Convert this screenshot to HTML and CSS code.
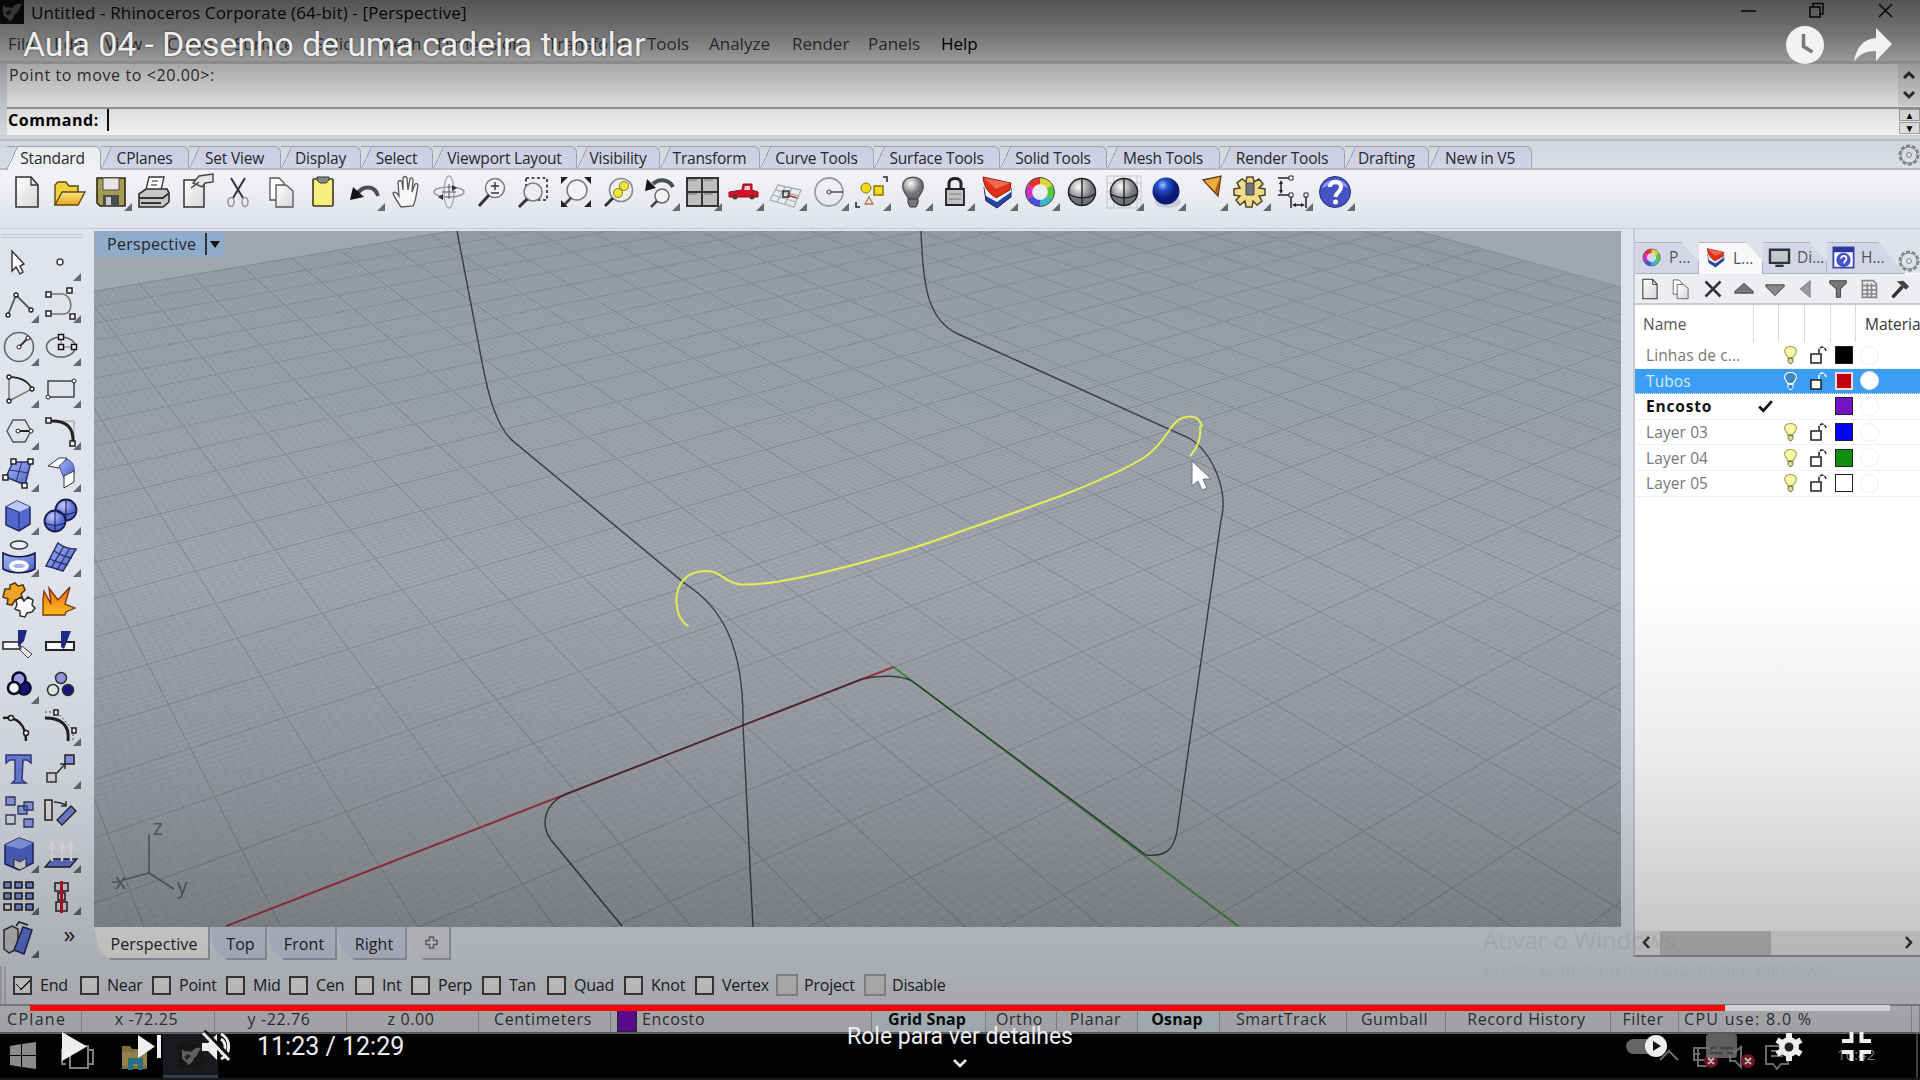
FILE: index.html
```html
<!DOCTYPE html>
<html lang="pt">
<head>
<meta charset="utf-8">
<title>Aula 04 - Desenho de uma cadeira tubular</title>
<link rel="stylesheet" href="styles.css">
</head>
<body>
<svg class="sprite" width="0" height="0">
  <defs>
    <linearGradient id="gPaper" x2="1" y2="1"><stop offset="0" stop-color="#fff"/><stop offset="1" stop-color="#d4d6d8"/></linearGradient>
    <linearGradient id="gGold" y2="1" x2="0"><stop offset="0" stop-color="#ffe68a"/><stop offset="1" stop-color="#eaa21a"/></linearGradient>
    <linearGradient id="gBlue" x2="1" y2="1"><stop offset="0" stop-color="#a9b8f5"/><stop offset="1" stop-color="#4a60c4"/></linearGradient>
    <linearGradient id="gFire" y2="1" x2="0"><stop offset="0" stop-color="#e8641a"/><stop offset="1" stop-color="#ffc21e"/></linearGradient>
    <radialGradient id="gBall" cx=".38" cy=".3"><stop offset="0" stop-color="#fff"/><stop offset="1" stop-color="#6f7276"/></radialGradient>
    <radialGradient id="gBlueBall" cx=".38" cy=".28"><stop offset="0" stop-color="#9fc4ff"/><stop offset=".4" stop-color="#2450c8"/><stop offset="1" stop-color="#0a1a78"/></radialGradient>
    <radialGradient id="gSoft" cx=".38" cy=".28"><stop offset="0" stop-color="#c3ccfb"/><stop offset="1" stop-color="#5468cc"/></radialGradient>
  </defs>
  <symbol id="new" viewBox="0 0 42 42"><path d="M10 6h15l7 8v22H10z" fill="url(#gPaper)" stroke="#333" stroke-width="1.6"/><path d="M25 6v8h7" fill="none" stroke="#333" stroke-width="1.3"/></symbol>
  <symbol id="open" viewBox="0 0 42 42"><path d="M7 34V14l3-3h8l3 4h9v7" fill="#f0d23c" stroke="#5b4a10" stroke-width="1.4"/><path d="M7 34l7-13h23l-7 13z" fill="url(#gGold)" stroke="#5b4a10" stroke-width="1.4"/></symbol>
  <symbol id="save" viewBox="0 0 42 42"><path d="M7 7h28v28H10l-3-3z" fill="#a79a52" stroke="#2c2a18" stroke-width="1.6"/><path d="M13 7h16v12H13z" fill="#e6e6e6" stroke="#55513a"/><path d="M13 24h16v11H13z" fill="#4c4c4c"/><path d="M16 26h5v8h-5z" fill="#ccc"/></symbol>
  <symbol id="print" viewBox="0 0 42 42"><path d="M13 19l3-13h15l-3 13z" fill="#fff" stroke="#333" stroke-width="1.3"/><path d="M19 10h6m-7 4h6" stroke="#666" stroke-width="1.5"/><path d="M6 23l7-5h21l2 4v9l-6 5H6z" fill="#c5c7c9" stroke="#2c2c2c" stroke-width="1.6"/><path d="M6 27h24l6-5M8 32h20" stroke="#333" fill="none" stroke-width="1.8"/></symbol>
  <symbol id="props" viewBox="0 0 42 42"><path d="M9 9h20v27H9z" fill="url(#gPaper)" stroke="#333" stroke-width="1.5"/><path d="M18 12l6-7 14-2v8l-8 1-3 4zM16 17l8-6" fill="#e6e6e6" stroke="#444" stroke-width="1.4"/></symbol>
  <symbol id="cut" viewBox="0 0 42 42"><path d="M14 7l12 20M28 7L16 27" stroke="#333" stroke-width="2"/><ellipse cx="14" cy="31" rx="3" ry="4.500" fill="none" stroke="#999" stroke-width="1.6"/><ellipse cx="28" cy="31" rx="3" ry="4.500" fill="none" stroke="#999" stroke-width="1.6"/></symbol>
  <symbol id="copy" viewBox="0 0 42 42"><path d="M11 7h9l5 5v17H11z" fill="#fff" stroke="#555" stroke-width="1.3"/><path d="M17 14h10l7 6v16H17z" fill="url(#gPaper)" stroke="#555" stroke-width="1.3"/></symbol>
  <symbol id="paste" viewBox="0 0 42 42"><rect x="12" y="8" width="20" height="27" rx="1" fill="#f7ef7c" stroke="#3c3820" stroke-width="1.6"/><path d="M16 6h12v3l-3 3h-6l-3-3z" fill="#888" stroke="#333"/></symbol>
  <symbol id="undo" viewBox="0 0 42 42"><path d="M34 25C31 14 19 14 13 23" fill="none" stroke="#4b4e52" stroke-width="4"/><path d="M6 29l3-13 11 10z" fill="#151515"/></symbol>
  <symbol id="hand" viewBox="0 0 42 42"><path d="M15 36c-4-6-7-10-8-14 2-2 4 0 6 3L12 11c1-2 3-2 4 0l1 8 0-12c1-2 3-2 4 0l1 12 2-11c1-2 3-1 3 1l-1 12 3-8c2-1 3 0 3 2-2 8-2 15-5 20z" fill="#f7f7f7" stroke="#555" stroke-width="1.3"/></symbol>
  <symbol id="orbit" viewBox="0 0 42 42"><ellipse cx="21" cy="21" rx="15" ry="5" fill="none" stroke="#8c8f93" stroke-width="1.3"/><ellipse cx="21" cy="21" rx="5" ry="16" fill="none" stroke="#a4a6aa" stroke-width="1.3"/><path d="M21 13v15m-7-7h14" stroke="#555"/><path d="M24 14l5 3-5 3zM15 23l-5 3 5 3z" fill="#333"/></symbol>
  <symbol id="zoom" viewBox="0 0 42 42"><circle cx="25" cy="17" r="9.500" fill="#f0f1f2" stroke="#77797c" stroke-width="1.5"/><path d="M19 24L9 35" stroke="#333" stroke-width="3"/><path d="M21 15h8m-4-4v8m-4 3h8" stroke="#333" stroke-width="1.4"/></symbol>
  <symbol id="zoomwin" viewBox="0 0 42 42"><path d="M14 7h21v22H14z" fill="none" stroke="#222" stroke-width="1.6" stroke-dasharray="3 2.500"/><circle cx="21" cy="21" r="9" fill="#ecedef" stroke="#77797c" stroke-width="1.5"/><path d="M15 28l-8 8" stroke="#333" stroke-width="3"/></symbol>
  <symbol id="zoomext" viewBox="0 0 42 42"><circle cx="23" cy="19" r="10" fill="#f2f3f4" stroke="#77797c" stroke-width="1.5"/><path d="M17 27l-7 7" stroke="#444" stroke-width="2.500"/><path d="M7 6h7l-7 7zM37 6h-7l7 7zM7 36h7l-7-7zM37 36h-7l7-7z" fill="#222"/></symbol>
  <symbol id="zoomsel" viewBox="0 0 42 42"><circle cx="24" cy="19" r="11.500" fill="#eef0e6" stroke="#85878a" stroke-width="1.6"/><path d="M16 27l-8 8" stroke="#333" stroke-width="3"/><circle cx="27" cy="15" r="4.500" fill="#f4e63a" stroke="#8a801a"/><circle cx="21" cy="22" r="4.500" fill="#f4e63a" stroke="#8a801a"/></symbol>
  <symbol id="undoview" viewBox="0 0 42 42"><path d="M34 16C29 7 19 8 14 13" fill="none" stroke="#4b4e52" stroke-width="4"/><path d="M6 20l2-12 9 9z" fill="#151515"/><circle cx="23" cy="25" r="7" fill="#f2f3f4" stroke="#666" stroke-width="1.5"/><path d="M18 30l-6 6" stroke="#444" stroke-width="2.500"/></symbol>
  <symbol id="views" viewBox="0 0 42 42"><path d="M6 7h31v28H6z" fill="#bcbec0" stroke="#333" stroke-width="2"/><path d="M21 7v28M6 21h31" stroke="#333" stroke-width="2"/><path d="M7 9h9m7 0h9M7 23h9m7 0h9" stroke="#777" stroke-width="1"/></symbol>
  <symbol id="car" viewBox="0 0 42 42"><path d="M6 21l13-2 1-6h9v6l6 2v5H6z" fill="#d5122b" stroke="#8c1020"/><path d="M22 15h5v4h-6z" fill="#f0c9cd"/><circle cx="12" cy="26" r="2.500" fill="#633"/><circle cx="29" cy="26" r="2.500" fill="#633"/></symbol>
  <symbol id="cplane" viewBox="0 0 42 42"><path d="M13 14l23 5-7 17-24-7zM20 16l-8 15M27 17l-7 16M11 19l23 6M8 24l23 7" fill="none" stroke="#a9b0ac" stroke-width="1.3"/><path d="M18 20h6v6h-6z" fill="none" stroke="#333" stroke-width="1.500"/><path d="M22 24l10 3" stroke="#a33" stroke-width="1.500"/></symbol>
  <symbol id="radius" viewBox="0 0 42 42"><circle cx="21" cy="21" r="14" fill="none" stroke="#9b9da1" stroke-width="1.8"/><circle cx="21" cy="21" r="2" fill="none" stroke="#333"/><path d="M23 21h12" stroke="#333" stroke-width="1.3"/></symbol>
  <symbol id="group" viewBox="0 0 42 42"><circle cx="16" cy="17" r="5" fill="#f8d81c" stroke="#8a7410"/><path d="M24 15h9v9h-9z" fill="#f8d81c" stroke="#8a7410" stroke-width="1.500"/><path d="M19 26l4 7h-8z" fill="#f6e6d8" stroke="#a67858" stroke-width="1.3"/><path d="M33 6h4v5M6 31v5h4" fill="none" stroke="#222" stroke-width="1.500"/></symbol>
  <symbol id="bulb" viewBox="0 0 42 42"><path d="M16 27C12 20 10 18 11 13c2-9 18-9 20 0 1 5-1 7-5 14z" fill="url(#gBall)" stroke="#555" stroke-width="1.4"/><path d="M16 28h10v4l-2 4h-6l-2-4z" fill="#777" stroke="#333"/></symbol>
  <symbol id="lock" viewBox="0 0 42 42"><path d="M15 18v-6c1-6 11-6 12 0v6" fill="none" stroke="#222" stroke-width="3"/><path d="M12 18h18v16H12z" fill="#bfc1c3" stroke="#222" stroke-width="1.8"/><path d="M15 23h12m-12 5h12" stroke="#777"/></symbol>
  <symbol id="layers" viewBox="0 0 42 42"><path d="M8 16l12 10 15-9v9L21 37 10 30z" fill="#2545a5" stroke="#182a60"/><path d="M8 15l12 9 15-9v6L21 31 10 25z" fill="#f4f4f4"/><path d="M7 6l28 6-1 7-14 8C13 22 8 17 7 6z" fill="#df3118" stroke="#842414"/><path d="M8 7l26 5-14 6z" fill="#f0694c"/></symbol>
  <symbol id="bluesphere" viewBox="0 0 42 42"><ellipse cx="23" cy="31" rx="13" ry="6" fill="#c9ccd4"/><circle cx="21" cy="20" r="13.500" fill="url(#gBlueBall)"/></symbol>
  <symbol id="sphere" viewBox="0 0 42 42"><circle cx="21" cy="21" r="13.500" fill="url(#gBall)" stroke="#222" stroke-width="1.500"/><path d="M21 8v26M8 23c7 5 19 5 26 0" fill="none" stroke="#222" stroke-width="1.400"/></symbol>
  <symbol id="gridsphere" viewBox="0 0 42 42"><path d="M4 5h34v32H4zM4 12h34M4 20h34M4 28h34M11 5v32M19 5v32M27 5v32M34 5v32" fill="none" stroke="#c3c6c9"/><circle cx="21" cy="21" r="13.500" fill="url(#gBall)" stroke="#222" stroke-width="1.500"/><path d="M21 8v26M8 23c7 5 19 5 26 0" fill="none" stroke="#222" stroke-width="1.400"/></symbol>
  <symbol id="spot" viewBox="0 0 42 42"><path d="M16 9l18-4-3 20z" fill="#f0aa3c" stroke="#5b3c14" stroke-width="1.300"/><path d="M33 6l-5 14 3 4z" fill="#a95a16"/></symbol>
  <symbol id="cog" viewBox="0 0 42 42"><path d="M18 6h6l1 5 5-3 4 5-4 4 6 1v6l-6 1 3 5-5 4-4-4-1 6h-6l-1-6-5 4-4-5 4-4-6-1v-6l6-1-3-5 5-4 4 3z" fill="#f2dc8c" stroke="#4f4420" stroke-width="1.500"/><path d="M17 12h8v12h-8z" fill="#70737a" stroke="#444"/></symbol>
  <symbol id="dim" viewBox="0 0 42 42"><path d="M6 7h12M9 11v10M6 24h13v13M34 23v14M22 34h9" fill="none" stroke="#222" stroke-width="1.500"/><path d="M9 9l-2 4h4zM9 23l-2-4h4zM20 34l4-2v4zM33 34l-4-2v4z" fill="#222"/><path d="M17 5h4v4h-4zM17 22h4v4h-4zM32 22h4v4h-4z" fill="#fff" stroke="#222"/></symbol>
  <symbol id="help" viewBox="0 0 42 42"><circle cx="21" cy="21" r="15.500" fill="#4653c4" stroke="#28307c"/><path d="M8 17c2-9 22-13 26 0-8-4-18-4-26 0z" fill="#8c98ee"/><path d="M16 16c0-7 11-7 11 0 0 5-5 5-5.500 10" fill="none" stroke="#fff" stroke-width="4"/><circle cx="21.500" cy="31" r="2.500" fill="#fff"/></symbol>
  <symbol id="wheel" viewBox="0 0 42 42"><g fill="none" stroke-width="6.500"><path d="M21 10a11 11 0 0 1 9.500 5.500" stroke="#d8d83a"/><path d="M30.500 15.500a11 11 0 0 1 0 11" stroke="#5cc83c"/><path d="M30.500 26.500A11 11 0 0 1 21 32" stroke="#35b8c8"/><path d="M21 32a11 11 0 0 1-9.500-5.500" stroke="#4650e0"/><path d="M11.500 26.500a11 11 0 0 1 0-11" stroke="#d030c0"/><path d="M11.500 15.500A11 11 0 0 1 21 10" stroke="#e83030"/></g><circle cx="21" cy="21" r="14.500" fill="none" stroke="#444"/></symbol>
  <!-- side tools -->
  <symbol id="s1" viewBox="0 0 42 42"><path d="M14 10v20l4-4 4 7 3-2-3-6 4-2z" fill="#fff" stroke="#333" stroke-width="1.400"/></symbol>
  <symbol id="s2" viewBox="0 0 42 42"><circle cx="20" cy="21" r="3" fill="#fff" stroke="#444" stroke-width="1.500"/></symbol>
  <symbol id="s3" viewBox="0 0 42 42"><path d="M10 32l8-20 15 15" fill="none" stroke="#555" stroke-width="1.800"/><g fill="#fff" stroke="#222" stroke-width="1.300"><circle cx="10" cy="32" r="2"/><circle cx="18" cy="12" r="2"/><circle cx="33" cy="27" r="2"/></g></symbol>
  <symbol id="s4" viewBox="0 0 42 42"><path d="M11 11h12c10 2 11 20 0 20H10" fill="none" stroke="#777" stroke-width="1.600"/><path d="M6 9h5v5H6zM6 28h5v5H6zM27 5h5v5h-5zM30 31h5v5h-5z" fill="#fff" stroke="#222" stroke-width="1.500"/></symbol>
  <symbol id="s5" viewBox="0 0 42 42"><circle cx="21" cy="21" r="14.500" fill="none" stroke="#666" stroke-width="1.600"/><path d="M21 21l9-9" stroke="#333" stroke-width="2"/><circle cx="21" cy="21" r="2" fill="#fff" stroke="#222"/><circle cx="30" cy="12" r="2" fill="#fff" stroke="#222"/></symbol>
  <symbol id="s6" viewBox="0 0 42 42"><ellipse cx="21" cy="21" rx="14.500" ry="10" fill="none" stroke="#666" stroke-width="1.600"/><path d="M21 11v10h13" fill="none" stroke="#777"/><path d="M18.500 8.500h5v5h-5zM18.500 18.500h5v5h-5zM31.500 18.500h5v5h-5z" fill="#fff" stroke="#111" stroke-width="1.500"/></symbol>
  <symbol id="s7" viewBox="0 0 42 42"><path d="M11 33V9c11 0 19 4 23 12z" fill="none" stroke="#777" stroke-width="1.500"/><path d="M11 9c11 0 19 4 23 12" fill="none" stroke="#222" stroke-width="1.500"/><g fill="#fff" stroke="#222" stroke-width="1.300"><circle cx="11" cy="9" r="2"/><circle cx="11" cy="33" r="2"/><circle cx="34" cy="21" r="2"/></g></symbol>
  <symbol id="s8" viewBox="0 0 42 42"><path d="M8 13h26v16H8z" fill="none" stroke="#444" stroke-width="1.500"/><g fill="#fff" stroke="#222"><circle cx="8" cy="29" r="2"/><circle cx="34" cy="13" r="2"/></g></symbol>
  <symbol id="s9" viewBox="0 0 42 42"><path d="M9 21l6-11h12l6 11-6 11H15z" fill="none" stroke="#555" stroke-width="1.500"/><path d="M20 21h13" stroke="#222" stroke-width="2"/><g fill="#fff" stroke="#222"><circle cx="20" cy="21" r="2"/><circle cx="33" cy="21" r="2"/></g></symbol>
  <symbol id="s10" viewBox="0 0 42 42"><path d="M9 11h25v22" fill="none" stroke="#999"/><path d="M9 11c17-1 25 6 24 22" fill="none" stroke="#222" stroke-width="3"/><path d="M6 8h5v5H6zM30 31h5v5h-5z" fill="#fff" stroke="#222" stroke-width="1.500"/></symbol>
  <symbol id="s11" viewBox="0 0 42 42"><path d="M15 10h18l-6 23-19-8z" fill="url(#gBlue)" stroke="#28306c" stroke-width="1.500"/><path d="M24 10l-6 20M12 18l18 3" stroke="#28306c"/><path d="M13 7h5v5h-5zM30 7h5v5h-5zM5 23h5v5H5zM24 31h5v5h-5z" fill="#fff" stroke="#222" stroke-width="1.500"/></symbol>
  <symbol id="s12" viewBox="0 0 42 42"><path d="M8 14L19 6h8l-8 10z" fill="#fff" stroke="#333"/><path d="M19 14l8-7c6 3 8 7 7 15l-10 4z" fill="url(#gBlue)" stroke="#46529a"/><path d="M24 24l10-5v11l-10 6z" fill="#fff" stroke="#333"/></symbol>
  <symbol id="s13" viewBox="0 0 42 42"><path d="M8 12l11-6 13 6v17l-11 7-13-6z" fill="#5368cf" stroke="#1e2860" stroke-width="1.500"/><path d="M8 12l11-6 13 6-11 5z" fill="#bcc8fb"/><path d="M8 12l13 5v19" fill="none" stroke="#1e2860"/></symbol>
  <symbol id="s14" viewBox="0 0 42 42"><circle cx="26" cy="15" r="10.500" fill="url(#gSoft)" stroke="#141a4c" stroke-width="1.800"/><circle cx="15" cy="26" r="10.500" fill="url(#gSoft)" stroke="#141a4c" stroke-width="1.800"/><path d="M5 28c6 3 14 3 20 0M15 16v20M17 17c6 3 12 3 18 0M26 5v20" fill="none" stroke="#141a4c"/></symbol>
  <symbol id="s15" viewBox="0 0 42 42"><ellipse cx="21" cy="8" rx="8.500" ry="4" fill="#eef" stroke="#333" stroke-width="1.500"/><path d="M5 16c9 5 23 5 32 0v16c-9 5-23 5-32 0z" fill="url(#gBlue)" stroke="#141a4c" stroke-width="1.600"/><ellipse cx="21" cy="29" rx="8" ry="4" fill="#a5b0ee" stroke="#fff" stroke-width="3.500"/></symbol>
  <symbol id="s16" viewBox="0 0 42 42"><path d="M18 6c6 5 12 6 18 6L23 34c-6-2-12-4-17-5z" fill="url(#gBlue)" stroke="#28306c" stroke-width="1.500"/><path d="M24 9L11 31m19-20L17 33M14 14c6 4 11 6 18 7M10 22c6 3 11 4 18 6" fill="none" stroke="#28306c" stroke-width="1.300"/></symbol>
  <symbol id="s17" viewBox="0 0 42 42"><path d="M7 10l5 0 0-4 5-2 3 3 5-1 2 5-4 4 2 5-4 3-4-2-3 5-5-1 1-5-5-2z" fill="#f0a428" stroke="#573a10" stroke-width="1.600"/><path d="M18 21l5-3 3 4 4-4 5 3-1 5 3 3-3 4-5 1-2 4-5-1v-5l-5-2 2-4z" fill="#fff" stroke="#333" stroke-width="1.500"/></symbol>
  <symbol id="s18" viewBox="0 0 42 42"><path d="M3 36V20l1-8 0 0 7 13L9 9l9 12L30 8l-5 17 10 4-9 4-1 3z" fill="url(#gFire)" stroke="#7a340c" stroke-width="1.300"/></symbol>
  <symbol id="s19" viewBox="0 0 42 42"><path d="M5 20h17v7H5z" fill="#fff" stroke="#222" stroke-width="1.500"/><path d="M24 24l10 8-4 4-8-8z" fill="#eee" stroke="#444"/><path d="M20 8h9l-3 11-6 6z" fill="#1d2c86"/></symbol>
  <symbol id="s20" viewBox="0 0 42 42"><path d="M6 20h28v8H6z" fill="#fff" stroke="#222" stroke-width="2"/><path d="M21 9h10l-7 18-3-2z" fill="#1d2c86"/></symbol>
  <symbol id="s21" viewBox="0 0 42 42"><g stroke="#0b0b28" stroke-width="2.600"><circle cx="26" cy="24" r="6.500" fill="#1d1180"/><circle cx="21" cy="15" r="6.500" fill="#a7a0ee"/><circle cx="16" cy="24" r="6" fill="#fff"/></g></symbol>
  <symbol id="s22" viewBox="0 0 42 42"><g stroke="#333" stroke-width="1.500"><circle cx="21" cy="14" r="5.500" fill="#9c98e4"/><circle cx="13" cy="26" r="5.500" fill="#e8eeec"/><circle cx="28" cy="26" r="5.500" fill="#1d1180"/></g></symbol>
  <symbol id="s23" viewBox="0 0 42 42"><path d="M5 12c13-2 23 6 23 23" fill="none" stroke="#222" stroke-width="2.500"/><g fill="#fff" stroke="#222" stroke-width="1.500"><circle cx="13" cy="12" r="2.500"/><circle cx="28" cy="27" r="2.500"/></g></symbol>
  <symbol id="s24" viewBox="0 0 42 42"><path d="M5 6h12l16 18v12" fill="none" stroke="#555" stroke-dasharray="2 2"/><path d="M5 12c15 0 25 6 23 23" fill="none" stroke="#222" stroke-width="3"/><path d="M14 4h4v5h-4zM32 22h4v5h-4z" fill="#fff" stroke="#222" stroke-width="1.500"/></symbol>
  <symbol id="s25" viewBox="0 0 42 42"><path d="M8 6h25v8l-4-3h-4l-1 20 4 3H14l3-3V11l-5 0-4 3z" fill="#6f82da" stroke="#303c84" stroke-width="1.500"/></symbol>
  <symbol id="s26" viewBox="0 0 42 42"><path d="M7 24h9v9H7zM17 24l8-9m-5 0h5v5" fill="#ddd" stroke="#333" stroke-width="1.500"/><path d="M25 6h9v9h-9z" fill="#8a9af0" stroke="#222" stroke-width="1.500"/></symbol>
  <symbol id="s27" viewBox="0 0 42 42"><g fill="#92a0ee" stroke="#30386c" stroke-width="1.300"><path d="M8 6h9v8H8zM26 11h9v8h-9zM20 15h9v8h-9zM26 28h9v8h-9z"/><path d="M8 24h9v9H8z" fill="#e4e4e4"/></g></symbol>
  <symbol id="s28" viewBox="0 0 42 42"><path d="M5 9h7v20H5z" fill="#e8e8e8" stroke="#222" stroke-width="1.500"/><path d="M14 11c5 0 8 1 12 3m-5 1h5v-5" fill="none" stroke="#333" stroke-width="1.500"/><path d="M31 15l5 5-14 14-5-5z" fill="#7486e2" stroke="#222" stroke-width="1.300"/></symbol>
  <symbol id="s29" viewBox="0 0 42 42"><path d="M7 12l14-7 14 5v20l-14 7-14-6z" fill="#5368cf" stroke="#1e2860" stroke-width="1.500"/><path d="M7 12l14-7 14 5-12 6z" fill="#92a4f2"/><path d="M16 26l6 3 6-4v9l-6 3-6-3z" fill="#e4e4e4" stroke="#333"/></symbol>
  <symbol id="s30" viewBox="0 0 42 42"><path d="M12 26h25l-7 8H5z" fill="#6578d8" stroke="#222" stroke-width="1.300"/><path d="M12 28V11m-3 5l3-6 3 6M22 28V11m-3 5l3-6 3 6M31 28V11m-3 5l3-6 3 6" stroke="#f0f0f0" stroke-width="2.400" fill="none"/></symbol>
  <symbol id="s31" viewBox="0 0 42 42"><g fill="#8291dc" stroke="#222" stroke-width="1.600"><path d="M6 7h7v6H6zM17 7h7v6h-7zM28 7h7v6h-7zM6 18h7v6H6zM17 18h7v6h-7zM28 18h7v6h-7zM17 29h7v6h-7zM28 29h7v6h-7z"/><path d="M6 29h7v6H6z" fill="#ddd"/></g></symbol>
  <symbol id="s32" viewBox="0 0 42 42"><path d="M15 8h13v8H15zM18 18h7v7h-7zM16 27h11v9H16z" fill="#ddd" stroke="#222" stroke-width="1.500"/><path d="M21.500 6v32" stroke="#c3142c" stroke-width="3"/></symbol>
  <symbol id="s33" viewBox="0 0 42 42"><path d="M6 12l8-4 6 3v20l-9 4-5-4z" fill="#c9cacc" stroke="#333" stroke-width="1.500"/><path d="M25 9l9 3-8 24-10-4z" fill="#5f76da" stroke="#1e2860" stroke-width="1.500"/><path d="M18 8l3-4 9 3" stroke="#222" fill="none" stroke-width="1.500"/></symbol>
  <!-- layer list glyphs -->
  <symbol id="lb" viewBox="0 0 16 20"><path d="M5.500 12.500C3 9 2 8 2 6c1-6 11-6 12 0 0 2-1 3-3.500 6.500z" fill="var(--bulb,#f9f8a4)" stroke="var(--edge,#a8a458)" stroke-width="1.200"/><path d="M5.500 13.500h5v3l-1.500 2H7l-1.500-2z" fill="var(--bulb,#d8d890)" stroke="var(--edge,#77753c)"/></symbol>
  <symbol id="lk" viewBox="0 0 18 20"><path d="M2 9h10v9H2z" fill="#fff" stroke="#222" stroke-width="1.600"/><path d="M10 8V5c1-4 6-4 7 1" fill="none" stroke="var(--edge,#222)" stroke-width="1.500" stroke-dasharray="4 1"/></symbol>
  <symbol id="rhino" viewBox="0 0 24 24"><path d="M0 0h24v24H0z" fill="#161616"/><path d="M3 5c3 4 6 1 9 3 3-4 6-5 10-4-3 4-3 8-7 10-1 3-3 6-6 7-1-4-5-4-6-7z" fill="#8b8b8b"/><path d="M5 13l4-3 3 2-4 4z" fill="#333"/></symbol>
</svg>

<main class="desktop">
  <header class="titlebar">
    <svg class="app-icon"><use href="#rhino"/></svg>
    <span class="caption">Untitled - Rhinoceros Corporate (64-bit) - [Perspective]</span>
    <svg class="winbtns" width="160" height="24" fill="none" stroke="#111" stroke-width="1.500"><path d="M1 11h15M70 7h10v10H70zM73 7V3.500h10V14h-3M139 4l13 13M152 4l-13 13"/></svg>
  </header>
  <nav class="menubar"><span>File</span><span>Edit</span><span>View</span><span>Curve</span><span>Surface</span><span>Solid</span><span>Mesh</span><span>Dimension</span><span>Transform</span><span>Tools</span><span>Analyze</span><span>Render</span><span>Panels</span><span class="solid">Help</span></nav>
  <section class="history"><span>Point to move to &lt;20.00&gt;:</span><svg width="22" height="42" fill="none" stroke="#333" stroke-width="3"><path d="M6 14l5-5 5 5M6 28l5 5 5-5"/></svg></section>
  <section class="command"><b>Command:</b><i class="caret"></i><span class="spin"><em>▲</em><em>▼</em></span></section>
  <nav class="tabs">
    <span class="tab on w94">Standard</span><span class="tab w88">CPlanes</span><span class="tab w92">Set View</span><span class="tab w80">Display</span><span class="tab w72">Select</span><span class="tab w144">Viewport Layout</span><span class="tab w83">Visibility</span><span class="tab w100">Transform</span><span class="tab w114">Curve Tools</span><span class="tab w126">Surface Tools</span><span class="tab w107">Solid Tools</span><span class="tab w113">Mesh Tools</span><span class="tab w125">Render Tools</span><span class="tab w84">Drafting</span><span class="tab w103">New in V5</span>
    <svg class="gear" width="24" height="26" viewBox="0 0 24 24"><circle cx="12" cy="12" r="9" fill="none" stroke="#85888d" stroke-width="3" stroke-dasharray="4 1.600"/><circle cx="12" cy="12" r="8" fill="#dfe1e6" stroke="#85888d"/><circle cx="12" cy="12" r="2.500" fill="none" stroke="#85888d"/></svg>
  </nav>
  <nav class="toolbar">
    <span><svg><use href="#new"/></svg></span><span><svg><use href="#open"/></svg></span><span class="m"><svg><use href="#save"/></svg></span><span><svg><use href="#print"/></svg></span><span><svg><use href="#props"/></svg></span><span><svg><use href="#cut"/></svg></span><span><svg><use href="#copy"/></svg></span><span><svg><use href="#paste"/></svg></span><span class="m"><svg><use href="#undo"/></svg></span><span><svg><use href="#hand"/></svg></span><span><svg><use href="#orbit"/></svg></span><span><svg><use href="#zoom"/></svg></span><span><svg><use href="#zoomwin"/></svg></span><span><svg><use href="#zoomext"/></svg></span><span><svg><use href="#zoomsel"/></svg></span><span class="m"><svg><use href="#undoview"/></svg></span><span class="m"><svg><use href="#views"/></svg></span><span class="m"><svg><use href="#car"/></svg></span><span class="m"><svg><use href="#cplane"/></svg></span><span class="m"><svg><use href="#radius"/></svg></span><span class="m"><svg><use href="#group"/></svg></span><span class="m"><svg><use href="#bulb"/></svg></span><span class="m"><svg><use href="#lock"/></svg></span><span class="m"><svg><use href="#layers"/></svg></span><span class="m"><svg><use href="#wheel"/></svg></span><span><svg><use href="#sphere"/></svg></span><span class="m"><svg><use href="#gridsphere"/></svg></span><span class="m"><svg><use href="#bluesphere"/></svg></span><span class="m"><svg><use href="#spot"/></svg></span><span class="m"><svg><use href="#cog"/></svg></span><span class="m"><svg><use href="#dim"/></svg></span><span class="m"><svg><use href="#help"/></svg></span>
  </nav>

  <section class="workspace">
    <aside class="side">
      <span><svg><use href="#s1"/></svg></span><span class="m"><svg><use href="#s2"/></svg></span>
      <span class="m"><svg><use href="#s3"/></svg></span><span class="m"><svg><use href="#s4"/></svg></span>
      <span class="m"><svg><use href="#s5"/></svg></span><span class="m"><svg><use href="#s6"/></svg></span>
      <span class="m"><svg><use href="#s7"/></svg></span><span class="m"><svg><use href="#s8"/></svg></span>
      <span class="m"><svg><use href="#s9"/></svg></span><span class="m"><svg><use href="#s10"/></svg></span>
      <span class="m"><svg><use href="#s11"/></svg></span><span class="m"><svg><use href="#s12"/></svg></span>
      <span class="m"><svg><use href="#s13"/></svg></span><span class="m"><svg><use href="#s14"/></svg></span>
      <span class="m"><svg><use href="#s15"/></svg></span><span class="m"><svg><use href="#s16"/></svg></span>
      <span><svg><use href="#s17"/></svg></span><span><svg><use href="#s18"/></svg></span>
      <span><svg><use href="#s19"/></svg></span><span><svg><use href="#s20"/></svg></span>
      <span class="m"><svg><use href="#s21"/></svg></span><span><svg><use href="#s22"/></svg></span>
      <span><svg><use href="#s23"/></svg></span><span class="m"><svg><use href="#s24"/></svg></span>
      <span><svg><use href="#s25"/></svg></span><span class="m"><svg><use href="#s26"/></svg></span>
      <span><svg><use href="#s27"/></svg></span><span><svg><use href="#s28"/></svg></span>
      <span class="m"><svg><use href="#s29"/></svg></span><span class="m"><svg><use href="#s30"/></svg></span>
      <span class="m"><svg><use href="#s31"/></svg></span><span class="m"><svg><use href="#s32"/></svg></span>
      <span class="m"><svg><use href="#s33"/></svg></span><span class="chev">»</span>
    </aside>
    <div class="center">
      <div class="viewport">
        <svg class="scene" viewBox="94 231 1527 696" width="1527" height="696">
          <defs><clipPath id="ground"><path d="M1051 129L-3000 813V2000H4000V945z"/></clipPath></defs>
          <g clip-path="url(#ground)"><path d="M94 231h1527v696H94z" fill="#000" fill-opacity=".02"/><path id="minor" class="minor"/><path id="major" class="major"/></g>
          <path d="M893.500 667L226.500 926" class="axis-x"/><path d="M893.500 667L1238 926" class="axis-y"/>
          <path class="tube" d="M457 231L482 362C488 394 496 427 514 442L684 583C722 607 744 645 743 725L753 927"/>
          <path class="tube" d="M921 231C923 288 928 320 958 334L1189 438C1212 452 1229 490 1221 520L1177 831C1174 850 1165 857 1146 855L912 681C900 675 880 675 862 679L566 794C544 804 540 824 551 840L622 926"/>
          <path class="wire" d="M688.500 626C672 618 670 578 697 572C722 567 722 583 741 584.500C790 587 920 547 959 532C1040 504 1104 482 1145 457C1172 437 1168 419 1189 416.500Q1199 416 1202 426L1200 427Q1202 443 1190 456"/>
          <path d="M1192 461v25l6-5 4 9 5-2-4-9h8z" fill="#fff" stroke="#6e7480"/>
          <g class="gizmo"><path d="M149 834v39l-26 7m26-7l25 16"/><path d="M112 882h7"/><text x="153" y="835">z</text><text x="115" y="889">x</text><text x="177" y="894">y</text></g>
        </svg>
        <div class="vlabel">Perspective<i></i><b></b></div>
      </div>
      <nav class="vtabs"><span class="on v1">Perspective</span><span class="v2">Top</span><span class="v3">Front</span><span class="v4">Right</span><span class="plus"><svg width="15" height="15" viewBox="0 0 15 15"><path d="M5.500 2h4v3.500H13v4H9.500V13h-4V9.500H2v-4h3.500z" fill="#e8e8ea" stroke="#777" stroke-width="1.600"/></svg></span></nav>
    </div>
    <aside class="panel">
      <nav class="ptabs"><span><svg><use href="#wheel"/></svg>P...</span><span class="on"><svg><use href="#layers"/></svg>L...</span><span><svg viewBox="0 0 42 42"><path d="M5 8h32v22H5z" fill="#c4c8cc" stroke="#333" stroke-width="4"/><path d="M14 35h14" stroke="#333" stroke-width="4"/></svg>Di...</span><span><svg viewBox="0 0 42 42"><path d="M4 4h34v34H4z" fill="#fff" stroke="#3947ac" stroke-width="3"/><path d="M4 4h34v8H4z" fill="#2c3aa0"/><circle cx="21" cy="25" r="12" fill="#4653c4"/><path d="M17 23c0-7 9-6 9 0 0 4-4 3-4 8" fill="none" stroke="#fff" stroke-width="3"/></svg>H...</span></nav>
      <div class="ptools">
        <svg viewBox="6 4 30 34"><use href="#new" width="42" height="42"/></svg><svg viewBox="8 4 30 34"><use href="#copy" width="42" height="42"/></svg><svg viewBox="0 0 24 24"><path d="M3 3l18 18M21 3L3 21" stroke="#333" stroke-width="3"/></svg><svg viewBox="0 0 24 24"><path d="M12 5l11 10v2H1v-2z" fill="#777" stroke="#333"/></svg><svg viewBox="0 0 24 24"><path d="M12 20L1 9V7h22v2z" fill="#888" stroke="#333"/></svg><svg viewBox="0 0 24 24"><path d="M17 2v20L5 12z" fill="#999" stroke="#777"/></svg><svg viewBox="0 0 24 24"><path d="M2 2h20v3l-7 7v10h-5V12L2 5z" fill="#777" stroke="#333"/></svg><svg viewBox="0 0 24 24"><path d="M4 2h13l4 4v16H4zM4 8h17M4 13h17M4 18h17M10 5v17M15 5v17" fill="none" stroke="#888" stroke-width="2"/></svg><svg viewBox="0 0 24 24"><path d="M3 22L15 9" stroke="#333" stroke-width="4"/><path d="M8 3l8-1 7 7-4 4-5-5z" fill="#444"/></svg>
      </div>
      <div class="phead"><span>Name</span><span></span><span></span><span></span><span></span><span>Materia</span></div>
      <div class="row"><span>Linhas de c...</span><span></span><svg class="lb"><use href="#lb"/></svg><svg class="lk"><use href="#lk"/></svg><i class="sw black"></i><i class="mat"></i></div>
      <div class="row sel"><span>Tubos</span><span></span><svg class="lb"><use href="#lb"/></svg><svg class="lk"><use href="#lk"/></svg><i class="sw red"></i><i class="mat"></i></div>
      <div class="row cur"><span>Encosto</span><svg class="ck" viewBox="0 0 16 14"><path d="M2 7l4 4 8-9" fill="none" stroke="#111" stroke-width="2.500"/></svg><span></span><span></span><i class="sw purple"></i><i class="mat"></i></div>
      <div class="row"><span>Layer 03</span><span></span><svg class="lb"><use href="#lb"/></svg><svg class="lk"><use href="#lk"/></svg><i class="sw blue"></i><i class="mat"></i></div>
      <div class="row"><span>Layer 04</span><span></span><svg class="lb"><use href="#lb"/></svg><svg class="lk"><use href="#lk"/></svg><i class="sw green"></i><i class="mat"></i></div>
      <div class="row"><span>Layer 05</span><span></span><svg class="lb"><use href="#lb"/></svg><svg class="lk"><use href="#lk"/></svg><i class="sw white"></i><i class="mat"></i></div>
      <div class="pscroll"><svg width="25" height="23" fill="none" stroke="#333" stroke-width="2.500"><path d="M14 6l-5 5.500 5 5.500"/></svg><i></i><svg width="22" height="23" fill="none" stroke="#333" stroke-width="2.500"><path d="M8 6l5 5.500L8 17"/></svg></div>
    </aside>
    <svg class="gear pgear" width="24" height="26" viewBox="0 0 24 24"><circle cx="12" cy="12" r="9" fill="none" stroke="#85888d" stroke-width="3" stroke-dasharray="4 1.600"/><circle cx="12" cy="12" r="8" fill="#dfe1e6" stroke="#85888d"/><circle cx="12" cy="12" r="2.500" fill="none" stroke="#85888d"/></svg>
    <div class="activate"><p>Ativar o Windows</p><small>Acesse Configurações para ativar o Windows.</small></div>
  </section>

  <section class="osnap">
    <label class="o67"><i class="chk"></i>End</label><label class="o72"><i></i>Near</label><label class="o74"><i></i>Point</label><label class="o63"><i></i>Mid</label><label class="o66"><i></i>Cen</label><label class="o56"><i></i>Int</label><label class="o71"><i></i>Perp</label><label class="o65"><i></i>Tan</label><label class="o77"><i></i>Quad</label><label class="o71"><i></i>Knot</label><label class="o81"><i></i>Vertex</label><label class="off o88"><i></i>Project</label><label class="off"><i></i>Disable</label>
  </section>
  <footer class="status"><span>CPlane</span><span>x -72.25</span><span>y -22.76</span><span>z 0.00</span><span>Centimeters</span><span class="lay"><i></i>Encosto</span><span class="hot">Grid Snap</span><span>Ortho</span><span>Planar</span><span class="hot">Osnap</span><span>SmartTrack</span><span>Gumball</span><span>Record History</span><span>Filter</span><span class="cpu">CPU use: 8.0 %</span><span></span></footer>
  <footer class="taskbar">
    <svg class="start" width="52" height="44"><path d="M10 12l11-2v11H10zM22 10l14-2v13H22zM10 22h11v11l-11-2zM22 22h14v13l-14-2z" fill="#9a9a9a"/></svg>
    <svg width="52" height="44" fill="none" stroke="#8c8c8c" stroke-width="2"><path d="M18 12h18v22H18zM14 16h-4v14h4M37 16h4v14h-4"/></svg>
    <svg width="59" height="44"><path d="M18 12h8l2 3h15v20H18z" fill="#8f7a46"/><path d="M18 18h25v14H18z" fill="#a58f56"/><path d="M24 36V24h15v12h-5v-6h-5v6z" fill="#287c90"/></svg>
    <span class="active"><svg width="26" height="24" opacity=".7"><use href="#rhino"/></svg></span>
    <span class="fill"></span>
    <svg width="280" height="44" fill="none" stroke="#777" stroke-width="2"><path d="M20 26l9-9 9 9"/><path d="M54 14h20v12H54zM58 14v18h10M54 20h6M90 18h5l6-5v20l-6-6h-5zM126 12h22v18h-7l-4 5-4-5h-7zM131 17h12m-12 5h12"/><g fill="#7c1824" stroke="none"><circle cx="71" cy="27" r="7"/><circle cx="108" cy="27" r="7"/></g><path d="M68 24l6 6m0-6l-6 6M105 24l6 6m0-6l-6 6" stroke="#ccc"/><path d="M277 0v44" stroke="#444"/></svg>
  </footer>
</main>

<div class="player">
  <h1>Aula 04 - Desenho de uma cadeira tubular</h1>
  <svg class="later" width="42" height="44" fill="#f2f2f2"><circle cx="20" cy="22" r="19"/><path d="M18.500 11v12.500l9 5.500" fill="none" stroke="#777" stroke-width="3.500"/></svg>
  <svg class="share" width="44" height="42" fill="#f2f2f2"><path d="M24 4l16 16-16 17V27C14 27 7 30 2 38 4 24 11 15 24 14z"/></svg>
  <div class="progress"><i></i></div>
  <svg class="playctl" width="190" height="40" fill="#eee"><path d="M12 2l25 14.500L12 31zM88 5l17 11.500L88 28zM107 5h4v23h-4z"/><path d="M152 13h6l9-9v26l-9-9h-6z"/><path d="M171 9a9 9 0 0 1 0 15M171 4a14 14 0 0 1 0 25" fill="none" stroke="#eee" stroke-width="3"/><path d="M154 1l28 28" stroke="#111" stroke-width="4"/><path d="M153 3l26 27" stroke="#eee" stroke-width="3"/></svg>
  <span class="time">11:23 / 12:29</span>
  <div class="hint">Role para ver detalhes<svg width="16" height="10" fill="none" stroke="#eee" stroke-width="2.500"><path d="M2 2l6 6 6-6"/></svg></div>
  <span class="sysclock">16:42</span>
  <svg class="rightctl" width="260" height="40"><rect x="6" y="9" width="34" height="15" rx="7.500" fill="#666"/><circle cx="36" cy="16" r="11" fill="#eee"/><path d="M33 11l8 5-8 5z" fill="#111"/><rect x="86" y="4" width="31" height="24" rx="3" fill="#777" fill-opacity=".8"/><path d="M90 18h6m4 0h13M90 23h13m4 0h6" stroke="#444" stroke-width="2.500"/><g transform="translate(169 17)"><g stroke="#eee" stroke-width="6"><path d="M0-14V14M-12-7L12 7M-12 7L12-7"/></g><circle r="10" fill="#eee"/><circle r="4.500" fill="#222"/></g><path d="M222 11h9.500V2M251 11h-9.500V2M222 22h9.500v9M251 22h-9.500v9" fill="none" stroke="#eee" stroke-width="4"/></svg>
</div>
<script src="grid.js"></script>
</body>
</html>
```
FILE: styles.css
```css
* { box-sizing: border-box; }
body { margin: 0; width: 1920px; height: 1080px; overflow: hidden; position: relative; background: #000; font-family: "Open Sans", "Noto Sans", sans-serif; font-size: 16px; color: #26282c; }
svg { display: block; flex: none; }
.sprite { position: absolute; }
i, em { font-style: normal; }
.desktop { width: 1920px; height: 1080px; display: flex; flex-direction: column; background: #e0e3eb; }
.desktop > * { flex: none; }

.titlebar { height: 30px; background: #f0f0f0; display: flex; align-items: flex-start; color: #111; }
.app-icon { width: 24px; height: 24px; }
.caption { margin-left: 7px; font-size: 17px; line-height: 25px; letter-spacing: .13px; flex: 1; }
.winbtns { margin-right: 20px; }
.menubar { height: 34px; padding-left: 8px; background: #ececec; border-bottom: 3px solid #d2d6dc; display: grid; grid-template-columns: 46px 51px 62px 67px 81px 63px 59px 111px 99px 62px 83px 76px 73px 60px; font-size: 17px; line-height: 28px; color: #484848; white-space: nowrap; letter-spacing: 0; }
.menubar .solid { color: #000; }
.history { height: 43px; margin-left: 7px; padding-left: 2px; background: #fff; display: flex; justify-content: space-between; font-size: 16px; line-height: 23px; letter-spacing: .6px; color: #3a3a3a; }
.history svg { background: #e8e8e8; }
.command { height: 28px; margin-left: 7px; padding-left: 1px; border-top: 2px solid #9da1aa; background: #fff; display: flex; align-items: flex-start; color: #000; }
.command b { font-size: 16px; line-height: 22px; letter-spacing: .55px; font-weight: 700; width: 99px; }
.caret { width: 2px; height: 22px; background: #111; }
.spin { margin-left: auto; width: 21px; display: grid; gap: 1px; }
.spin em { height: 12px; font-size: 10px; line-height: 11px; text-align: center; background: #eee; border: 1px solid #aaa; }

.tabs { height: 35px; padding: 8px 0 0 7px; border-top: 1px solid #d6d9e0; background: linear-gradient(#d9dde4 3px, #bcc6cf 3px, #bcc6cf 5px, #dcdfe7 5px); border-bottom: 2px solid #b8bac6; display: flex; align-items: flex-end; }
.tab { height: 22px; line-height: 22px; text-align: center; font-size: 15.5px; letter-spacing: -.2px; position: relative; border-top: 1px solid #a5a8b8; border-right: 1px solid #a5a8b8; border-radius: 0 6px 0 0; background: linear-gradient(115deg, #dcdfe7 9px, #a5a8b8 9px, #a5a8b8 10px, #d3d6e8 10px); white-space: nowrap; }
.tab.on { background: linear-gradient(115deg, #dcdfe7 9px, #a5a8b8 9px, #a5a8b8 10px, #f3f4f8 10px); height: 24px; margin-bottom: -2px; padding-right: 2px; }
.w94{width:94px}.w88{width:88px}.w92{width:92px}.w80{width:80px}.w72{width:72px}.w144{width:144px}.w83{width:83px}.w100{width:100px}.w114{width:114px}.w126{width:126px}.w107{width:107px}.w113{width:113px}.w125{width:125px}.w84{width:84px}.w103{width:103px}
.gear { margin-left: auto; margin-right: -1px; }
.toolbar { height: 59px; padding: 1px 0 0 6px; display: flex; background: linear-gradient(#f3f4f8, #dfe2ea); border-bottom: 1px solid #c9ccd6; }
.toolbar span { width: 42.2px; height: 42px; position: relative; }
.toolbar svg, .side svg { width: 42px; height: 42px; }
.m { position: relative; }
.m::after { content: ""; position: absolute; right: 1px; top: 32px; border: 4px solid transparent; border-right-color: #66696e; border-bottom-color: #66696e; }

.workspace { height: 737px; display: flex; position: relative; }
.side { width: 96px; margin-left: -2px; padding-top: 12px; display: grid; grid-template-columns: 42px 42px; grid-auto-rows: 42.3px; background: linear-gradient(#c4c7d0, #c4c7d0) 3px 5px / 82px 1px no-repeat, linear-gradient(#c4c7d0, #c4c7d0) 3px 8px / 82px 1px no-repeat; }
.chev { font-size: 24px; line-height: 32px; text-align: center; padding-left: 17px; }
.center { width: 1527px; padding-top: 2px; }
.viewport { height: 696px; position: relative; background: linear-gradient(#9fa6ae, #a3a8b1 50%, #a0a4aa); }
.minor { fill: none; stroke: #3c4656; stroke-opacity: .075; stroke-width: 1; }
.major { fill: none; stroke: #3a4048; stroke-opacity: .21; stroke-width: 1.2; }
.axis-x { stroke: #a23744; stroke-width: 2; }
.axis-y { stroke: #3f8f45; stroke-width: 2; }
.tube { fill: none; stroke: #2b2d31; stroke-opacity: .85; stroke-width: 1.4; }
.wire { fill: none; stroke: #e3ee52; stroke-width: 2; }
.gizmo { stroke: #5c6066; stroke-width: 1.6; fill: none; }
.gizmo text { stroke: none; fill: #5c6066; font: 21px "Open Sans", sans-serif; }
.vlabel { position: absolute; left: 2px; top: 0; width: 128px; height: 26px; padding-left: 11px; background: #8fabca; line-height: 27px; letter-spacing: .3px; display: flex; align-items: center; }
.vlabel i { width: 2px; height: 22px; background: #333; margin: 0 3px 0 9px; }
.vlabel b { border: 5px solid transparent; border-top: 7px solid #111; border-bottom: 0; }
.vtabs { height: 33px; display: flex; line-height: 35px; letter-spacing: .1px; }
.vtabs span { text-align: center; padding-left: 6px; background: #d2d5e8; clip-path: polygon(0 0, 100% 0, 100% 100%, 17px 100%, 5px 70%); border-right: 2px solid #a9acb8; border-bottom: 2px solid #a9acb8; }
.vtabs .on { background: #f6f6f4; }
.v1 { width: 116px; } .v2 { width: 57px; } .v3 { width: 70px; } .v4 { width: 70px; }
.vtabs .plus { width: 44px; background: #dee0e6; display: flex; align-items: center; justify-content: center; }

.panel { width: 287px; margin-left: 12px; padding-top: 13px; margin-bottom: 9px; border-left: 2px solid #c9ccd8; border-bottom: 2px solid #9a9ca4; background: linear-gradient(#dfe2ea 44px, #fff 44px); display: flex; flex-direction: column; font-size: 15.5px; }
.ptabs { height: 32px; display: flex; }
.ptabs span { width: 64px; display: flex; align-items: center; gap: 5px; padding-left: 4px; padding-bottom: 2px; background: #d3d6e6; border: 1px solid #afb2c0; border-left: 0; clip-path: polygon(0 0, 72% 0, 100% 60%, 100% 100%, 0 100%); color: #555; }
.ptabs span:last-child { clip-path: polygon(0 0, 66% 0, 100% 100%, 0 100%); width: 78px; }
.ptabs .on { background: #f8f8fa; border-bottom: 0; }
.ptabs svg { width: 25px; height: 25px; }
.ptools { height: 31px; display: flex; align-items: center; gap: 11.3px; padding-left: 5px; background: #eceef2; border-bottom: 2px solid #c6c9d2; }
.ptools svg { width: 20px; height: 22px; }
.phead, .row { display: grid; grid-template-columns: 119px 25px 26px 26px 25px 1fr; overflow: hidden; white-space: nowrap; }
.phead { height: 37px; line-height: 38px; margin-bottom: 1px; color: #555; }
.phead span { border-right: 1px solid #d8d8d8; }
.phead span:first-child, .row span:first-child { padding-left: 8px; }
.phead span:last-child { padding-left: 9px; border: 0; color: #333; }
.row { height: 25.6px; align-items: center; color: #777; border-bottom: 1px dotted #e4e4e4; letter-spacing: .1px; }
.row > span:first-child { padding-left: 11px; }
.row.sel { background: #3c9df5; color: #d8eaff; --bulb: #3f86c4; --edge: #fff; }
.row.cur { color: #111; font-weight: 700; letter-spacing: .8px; }
.lb { width: 17px; height: 20px; margin-left: 3px; } .lk { width: 18px; height: 20px; margin-left: 4px; }
.ck { width: 17px; height: 15px; margin-left: 3px; }
.sw { width: 18px; height: 18px; margin-left: 4px; border: 1px solid #222; }
.black{background:#000}.red{background:#c00010;border:2px solid #ffd8d8}.purple{background:#7314c4}.blue{background:#0006f4}.green{background:#0d900d}.white{background:#fff;border-width:1.5px}
.mat { width: 19px; height: 19px; margin-left: 4px; border-radius: 50%; border: 1px solid #f2ecf0; } .sel .mat { background: #fff; }
.pscroll { margin-top: auto; height: 24px; background: #ececec; display: flex; }
.pscroll i { width: 111px; background: #c6c6c6; margin-right: auto; }
.pgear { position: absolute; right: 0; top: 19px; }
.activate { position: absolute; left: 1483px; top: 694px; color: #868a90; opacity: .15; }
.activate p { margin: 0; font-size: 24px; line-height: 34px; letter-spacing: -.1px; }
.activate small { display: block; font-size: 16.5px; line-height: 26px; opacity: .45; }

.osnap { height: 38px; padding-left: 13px; display: flex; align-items: center; background: linear-gradient(90deg, #c2c4cb 2px, transparent 2px 4px, #c2c4cb 4px 6px, transparent 6px); letter-spacing: -.2px; }
.osnap label { display: flex; align-items: center; gap: 8px; white-space: nowrap; }
.osnap i { width: 19px; height: 19px; background: #f4f4f4; border: 2px solid #444; flex: none; }
.osnap .chk { background: linear-gradient(-45deg, transparent 45%, #222 45%, #222 53%, transparent 53%) 5px 2px / 10px 10px no-repeat, linear-gradient(45deg, transparent 43%, #222 43%, #222 57%, transparent 57%) 1px 6px / 6px 6px no-repeat, #f4f4f4; }
.osnap .off { gap: 6px; }
.osnap .off i { width: 22px; height: 22px; background: #dcdcdc; border-color: #a8a9ac; }
.o67{width:67px}.o72{width:72px}.o74{width:74px}.o63{width:63px}.o66{width:66px}.o56{width:56px}.o71{width:71px}.o65{width:65px}.o77{width:77px}.o81{width:81px}.o88{width:88px}
.status { height: 30px; border-top: 2px solid #9b9fa6; border-bottom: 2px solid #777; display: grid; grid-template-columns: 82px 133px 132px 132px 132px 261px 114px 71px 81px 82px 127px 99px 165px 68px 233px 8px; background: #dcdee4; color: #3c3c40; letter-spacing: .6px; }
.status span { border-right: 1px solid #a8abb3; text-align: center; line-height: 27px; padding-right: 3px; overflow: hidden; white-space: nowrap; }
.status span:first-child, .status .cpu { text-align: left; padding-left: 7px; letter-spacing: 1.3px; }
.status .cpu { padding-left: 5px; }
.status .hot { background: #d7e8ee; font-weight: 700; color: #0c0c0c; letter-spacing: .1px; }
.status .lay { display: flex; gap: 5px; padding-left: 6px; }
.lay i { width: 20px; height: 23px; margin-top: 3px; background: #7a0cc0; border: 1px solid #333; }
.taskbar { height: 46px; background: #000204; border-bottom: 2px solid #1c1c1e; display: flex; }
.taskbar .active { width: 55px; background: #1b1d20; border-bottom: 3px solid #34465a; display: flex; justify-content: center; padding-top: 10px; }
.taskbar .fill { flex: 1; }

.player { position: absolute; inset: 0; font-family: Roboto, sans-serif; color: #eee; background: linear-gradient(rgba(0,0,0,.65) 0, rgba(0,0,0,.54) 28px, rgba(0,0,0,.36) 60px, rgba(0,0,0,.15) 104px, rgba(0,0,0,.05) 136px, transparent 175px, transparent 580px, rgba(0,0,0,.08) 760px, rgba(0,0,0,.215) 930px, rgba(0,0,0,.28) 1033px, rgba(0,0,0,.1) 1034px); }
.player > * { position: absolute; }
.player h1 { margin: 0; left: 23px; top: 24px; font-size: 34px; line-height: 41px; font-weight: 400; letter-spacing: -.15px; white-space: nowrap; text-shadow: 0 0 2px #333; }
.later { left: 1785px; top: 23px; }
.share { left: 1852px; top: 24px; }
.progress { left: 30px; top: 1005px; width: 1860px; height: 6px; background: #cfd0d2; }
.progress i { display: block; width: 1695px; height: 6px; background: #f00; }
.playctl { left: 50px; top: 1030px; }
.time { left: 257px; top: 1031px; font-size: 25px; line-height: 31px; white-space: nowrap; }
.hint { left: 847px; top: 1022px; width: 226px; font-size: 23px; line-height: 30px; white-space: nowrap; display: flex; flex-direction: column; align-items: center; gap: 6px; }
.sysclock { left: 1837px; top: 1043px; font: 15px/22px "Open Sans", sans-serif; color: #777; }
.rightctl { left: 1620px; top: 1030px; }
```
FILE: grid.js
```js
// Each family of lines converges on its own vanishing point on the horizon.
(function () {
  var base = 926, horizon = -238;
  function family(vx, originX, step, from, to) {
    var minor = '', major = '';
    for (var n = from * 10; n <= to * 10; n++) {
      var x = originX + step * n / 10, k = 1.3;
      var d = 'M' + vx + ' ' + horizon + 'L' + (vx + (x - vx) * k).toFixed(1) + ' ' + (horizon + (base - horizon) * k).toFixed(1);
      if (n % 10 === 0) major += d; else minor += d;
    }
    return [minor, major];
  }
  var a = family(3226, 226.7, 194.3, -20, 8);
  var b = family(-309, 1238, 136.8, -12, 20);
  document.getElementById('minor').setAttribute('d', a[0] + b[0]);
  document.getElementById('major').setAttribute('d', a[1] + b[1]);
})();
```
